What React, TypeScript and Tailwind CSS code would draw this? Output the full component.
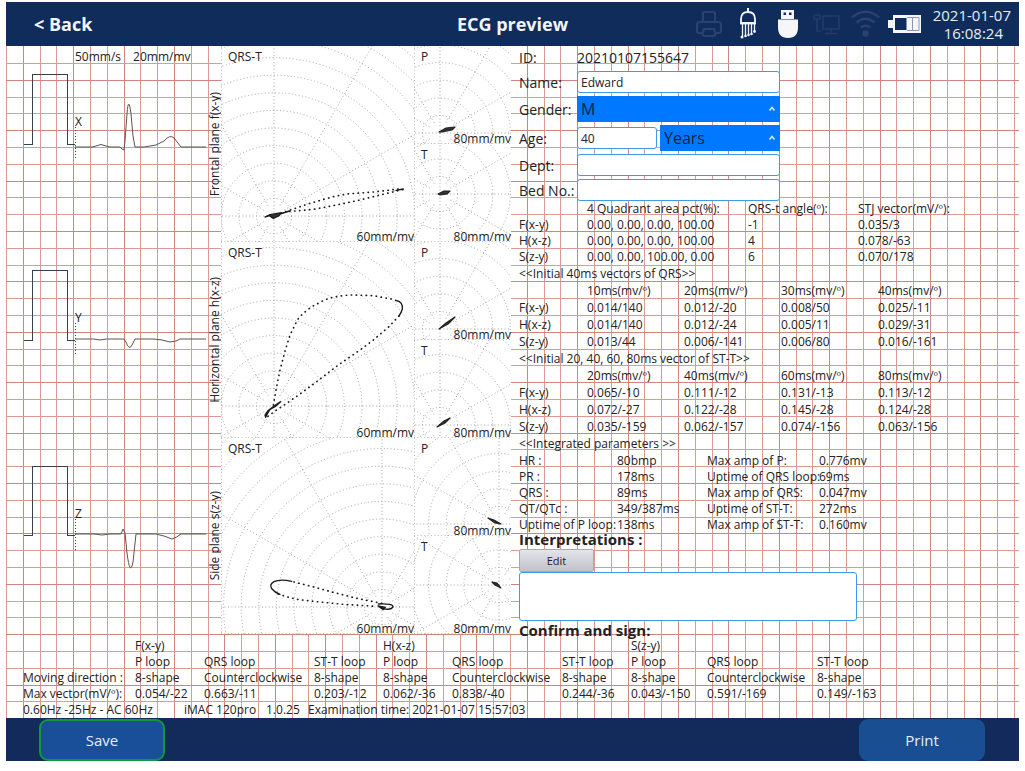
import type { ReactNode } from "react";

const VECTOR_ROWS = ["F(x-y)", "H(x-z)", "S(z-y)"];

const quadrantHead = ["4 Quadrant area pct(%):", "QRS-t angle(º):", "STJ vector(mV/º):"];
const quadrant = [
  ["0.00, 0.00, 0.00, 100.00", "-1", "0.035/3"],
  ["0.00, 0.00, 0.00, 100.00", "4", "0.078/-63"],
  ["0.00, 0.00, 100.00, 0.00", "6", "0.070/178"],
];

const qrsHead = ["10ms(mv/º)", "20ms(mv/º)", "30ms(mv/º)", "40ms(mv/º)"];
const qrs = [
  ["0.014/140", "0.012/-20", "0.008/50", "0.025/-11"],
  ["0.014/140", "0.012/-24", "0.005/11", "0.029/-31"],
  ["0.013/44", "0.006/-141", "0.006/80", "0.016/-161"],
];

const sttHead = ["20ms(mv/º)", "40ms(mv/º)", "60ms(mv/º)", "80ms(mv/º)"];
const stt = [
  ["0.065/-10", "0.111/-12", "0.131/-13", "0.113/-12"],
  ["0.072/-27", "0.122/-28", "0.145/-28", "0.124/-28"],
  ["0.035/-159", "0.062/-157", "0.074/-156", "0.063/-156"],
];

const integrated = [
  ["HR :", "80bmp", "Max amp of P:", "0.776mv"],
  ["PR :", "178ms", "Uptime of QRS loop:", "69ms"],
  ["QRS :", "89ms", "Max amp of QRS:", "0.047mv"],
  ["QT/QTc :", "349/387ms", "Uptime of ST-T:", "272ms"],
  ["Uptime of P loop:", "138ms", "Max amp of ST-T:", "0.160mv"],
];

const loopHead = ["P loop", "QRS loop", "ST-T loop", "P loop", "QRS loop", "ST-T loop", "P loop", "QRS loop", "ST-T loop"];
const directions = ["8-shape", "Counterclockwise", "8-shape", "8-shape", "Counterclockwise", "8-shape", "8-shape", "Counterclockwise", "8-shape"];
const maxVectors = ["0.054/-22", "0.663/-11", "0.203/-12", "0.062/-36", "0.838/-40", "0.244/-36", "0.043/-150", "0.591/-169", "0.149/-163"];

function GraphPaper() {
  const steps = Array.from({ length: 160 }, (_, i) => i);
  return (
    <svg className="pointer-events-none absolute inset-0 h-full w-full" aria-hidden="true" shapeRendering="crispEdges">
      {steps.map((i) => (
        <rect key={`v${i}`} x={Math.round(i * 16.8)} y="0" width="1" height="100%" fill={i % 3 === 1 ? "#cf8580" : "#dc9a95"} />
      ))}
      {steps.map((i) => (
        <rect key={`h${i}`} x="0" y={Math.round(17 + i * 16.8)} width="100%" height="1" fill={i % 3 === 1 ? "#cf8580" : "#dc9a95"} />
      ))}
    </svg>
  );
}

type Point = [number, number];

function PolarGrid({ center, width, height, children }: { center: Point; width: number; height: number; children: ReactNode }) {
  const [cx, cy] = center;
  return (
    <svg className="absolute inset-0 h-full w-full" viewBox={`0 0 ${width} ${height}`} aria-hidden="true">
      <g fill="none" stroke="#9a9a9a" strokeWidth="0.9" strokeDasharray="1 2.4">
        {Array.from({ length: 13 }, (_, i) => (
          <circle key={i} cx={cx} cy={cy} r={(i + 1) * 17.6} />
        ))}
        {Array.from({ length: 12 }, (_, i) => {
          const a = (i * Math.PI) / 6;
          const start = i % 3 === 0 ? 0 : 12;
          return <line key={i} x1={cx + start * Math.cos(a)} y1={cy + start * Math.sin(a)} x2={cx + 300 * Math.cos(a)} y2={cy + 300 * Math.sin(a)} />;
        })}
        <path d={`M0.5 0V${height}M0 ${height - 0.5}H${width}`} stroke="#b5b5b5" />
      </g>
      {children}
    </svg>
  );
}

type PlaneSpec = {
  title: string;
  lead: string;
  pulse: string;
  trace: string;
  qrs: { center: Point; dots: string; solid: string; shift: string };
  p: { center: Point; loop: string };
  t: { center: Point; loop: string };
};

const planes: PlaneSpec[] = [
  {
    title: "Frontal plane f(x-y)",
    lead: "X",
    pulse: "M18 98H26V28H61V98H69",
    trace: "M69 101H86L90 100Q95 97 100 100L104 101H114L116 103L118 104L119 95L121 68Q122.500 48 125 68L127 90L129 101H138L150 99L158 95Q164 88 168 92L175 101H200",
    qrs: {
      center: [53, 170],
      shift: "translate(-21 -6) scale(0.33333)",
      dots: "M243 520L265 512L330 490L400 470L440 462L520 456L605 446M608 449L540 465L480 480L400 497L340 508L262 515",
      solid: "M195 531L210 524L245 518L236 528L220 535L208 527Z M240 522L268 513M588 451L610 447",
    },
    p: { center: [26, 87], loop: "M25 86L32 82L41 81L38 84L28 86Z" },
    t: { center: [26, 50], loop: "M24 50L30 47L36 47L33 50L26 51Z" },
  },
  {
    title: "Horizontal plane h(x-z)",
    lead: "Y",
    pulse: "M18 98H26V28H61V98H69",
    trace: "M69 97H88L94 98L100 97H118L120 100Q123 109 126 103L129 97H148L156 98L164 100L170 99L174 97H200",
    qrs: {
      center: [53, 164],
      shift: "translate(-21 -2) scale(0.33333)",
      dots: "M220 495L228 450L240 390L256 330L270 285L292 240Q304 224 320 212Q336 198 355 190Q376 177 400 172Q430 165 460 165L520 167L580 178L600 187M597 228L565 262L520 300L480 330L415 375L350 425L300 462L260 490L230 510L202 530",
      solid: "M197 532L195 525L203 513L222 498L242 485L225 500L210 508L200 525Z",
    },
    p: { center: [26, 87], loop: "M25 87L32 81L41 75L34 82Z" },
    t: { center: [26, 85], loop: "M23 87L30 81L36 78L31 83Z" },
  },
  {
    title: "Side plane s(z-y)",
    lead: "Z",
    pulse: "M18 97H26V28H61V97H69",
    trace: "M69 96H88L96 97L104 96H115L117 91L119 95L121 115Q124 139 127 124L130 96H150L158 98L166 101Q170 100 175 96H200",
    qrs: {
      center: [161, 169],
      shift: "translate(-21 -8) scale(0.33333)",
      dots: "M545 520L470 505L400 487L330 468L270 453M235 492L260 500L290 508L350 515L430 523L530 529",
      solid: "M534 528L556 532L550 539Z",
    },
    p: { center: [85, 86], loop: "M74 80L80 82L87 86L81 85Z" },
    t: { center: [85, 49], loop: "M78 46L83 47L87 52L81 49Z" },
  },
];

const curveExtras = [
  "",
  "M590 182Q609 186 607 207Q604 218 597 228",
  "M275 454Q240 446 222 455Q206 464 216 477Q224 487 240 493M535 522Q580 520 579 531Q572 541 550 536",
];

function PanelLabels({ name, scale }: { name: string; scale: string }) {
  return (
    <div className="relative flex h-full flex-col justify-between pl-[7px] text-[12px] leading-4 text-[#222]">
      <span className="pt-[3px]">{name}</span>
      <span className="-mb-[3px] self-end">{scale}</span>
    </div>
  );
}

function PlaneRow({ plane, index }: { plane: PlaneSpec; index: number }) {
  return (
    <div className="flex h-[196px]">
      <div className="relative w-[202px]">
        <svg className="absolute inset-0 h-full w-full" viewBox="0 0 202 196" aria-hidden="true">
          <path d={plane.pulse} fill="none" stroke="#34424c" strokeWidth="1" shapeRendering="crispEdges" />
          <path d={plane.trace} fill="none" stroke="#5a5450" strokeWidth="1" strokeLinejoin="round" />
          <path d="M69.500 81V114" stroke="#444" strokeWidth="1" strokeDasharray="1 2" />
        </svg>
        <div className="relative flex h-full flex-col pl-[69px] text-[12px] leading-4 text-[#222]">
          <div className="flex h-[68px] gap-3 pt-[3px]">
            {index === 0 && (
              <>
                <span>50mm/s</span>
                <span>20mm/mv</span>
              </>
            )}
          </div>
          <span>{plane.lead}</span>
        </div>
      </div>
      <div className="flex w-[13px] items-center justify-center">
        <span className="rotate-180 text-[12px] leading-3 whitespace-nowrap text-[#222] [writing-mode:vertical-rl]">{plane.title}</span>
      </div>
      <div className="relative w-[193px] bg-white">
        <PolarGrid center={plane.qrs.center} width={193} height={196}>
          <g transform={plane.qrs.shift} fill="none" stroke="#1a1a1a" strokeLinecap="round" strokeLinejoin="round">
            <path d={plane.qrs.dots} strokeWidth="5" strokeDasharray="1 14" />
            <path d={plane.qrs.solid} strokeWidth="4" fill="#333" />
            <path d={curveExtras[index]} strokeWidth="4" />
          </g>
        </PolarGrid>
        <PanelLabels name="QRS-T" scale="60mm/mv" />
      </div>
      <div className="grid w-[97px] grid-rows-2 bg-white">
        {[
          { name: "P", ...plane.p },
          { name: "T", ...plane.t },
        ].map((panel) => (
          <div key={panel.name} className="relative h-[98px]">
            <PolarGrid center={panel.center} width={97} height={98}>
              <path d={panel.loop} fill="#333" stroke="#222" strokeWidth="1.200" strokeLinejoin="round" />
            </PolarGrid>
            <PanelLabels name={panel.name} scale="80mm/mv" />
          </div>
        ))}
      </div>
    </div>
  );
}

function VectorTable({ head, rows, label, compact = false }: { head: string[]; rows: string[][]; label: string; compact?: boolean }) {
  return (
    <table className="table-fixed border-collapse text-left whitespace-nowrap" aria-label={label}>
      <colgroup>
        <col className="w-[68px]" />
        {compact ? (
          <>
            <col className="w-[161px]" />
            <col className="w-[110px]" />
            <col className="w-[97px]" />
          </>
        ) : (
          head.map((h) => <col key={h} className="w-[97px]" />)
        )}
      </colgroup>
      <thead>
        <tr className="h-4 leading-4">
          <td className="p-0" />
          {head.map((h) => (
            <th key={h} className="p-0 font-normal">{h}</th>
          ))}
        </tr>
      </thead>
      <tbody>
        {rows.map((row, r) => (
          <tr key={VECTOR_ROWS[r]} className={compact ? "leading-4" : "leading-[17px]"}>
            <th className="p-0 font-normal">{VECTOR_ROWS[r]}</th>
            {row.map((v, c) => (
              <td key={c} className="p-0">{v}</td>
            ))}
          </tr>
        ))}
      </tbody>
    </table>
  );
}

function UpCaret() {
  return (
    <svg className="pointer-events-none absolute top-1/2 right-1 -mt-1 h-2 w-2" viewBox="0 0 8 8" fill="none" stroke="#d9ecff" strokeWidth="1.500" aria-hidden="true">
      <path d="M1.500 5.500L4 2.500L6.500 5.500" />
    </svg>
  );
}

const inputClass = "h-[22px] rounded-[3px] border border-[#3f9be8] bg-white px-[3px] text-[12px] text-[#222] outline-none";
const selectClass = "h-[26px] w-full appearance-none bg-[#0078ff] px-1 text-[16px] leading-5 text-[#0d2440] outline-none";

function PatientForm() {
  return (
    <form className="flex flex-col gap-[3px] text-[14px] text-[#222]">
      <div className="flex h-[22px] items-center">
        <span className="w-[58px]">ID:</span>
        <span>20210107155647</span>
      </div>
      <div className="flex items-center">
        <label htmlFor="name" className="w-[58px]">Name:</label>
        <input id="name" className={`${inputClass} w-[203px]`} defaultValue="Edward" />
      </div>
      <div className="flex items-center">
        <label htmlFor="gender" className="w-[58px]">Gender:</label>
        <div className="relative w-[203px]">
          <select id="gender" className={selectClass} defaultValue="M">
            <option>M</option>
            <option>F</option>
          </select>
          <UpCaret />
        </div>
      </div>
      <div className="flex items-center">
        <label htmlFor="age" className="w-[58px]">Age:</label>
        <input id="age" className={`${inputClass} mr-[3px] w-[80px]`} defaultValue="40" />
        <div className="relative w-[120px]">
          <select aria-label="Age unit" className={selectClass} defaultValue="Years">
            <option>Years</option>
            <option>Months</option>
          </select>
          <UpCaret />
        </div>
      </div>
      <div className="flex items-center">
        <label htmlFor="dept" className="w-[58px]">Dept:</label>
        <input id="dept" className={`${inputClass} w-[203px]`} />
      </div>
      <div className="flex items-center">
        <label htmlFor="bed" className="w-[58px] whitespace-nowrap">Bed No.:</label>
        <input id="bed" className={`${inputClass} w-[203px]`} />
      </div>
    </form>
  );
}

function StatusIcons() {
  return (
    <div className="flex items-center">
      <svg className="mr-[16px] h-[28px] w-[28px]" viewBox="0 0 28 28" fill="none" stroke="#2b416f" strokeWidth="2.200" aria-label="Printer">
        <path d="M8 12V3.500Q8 2 9.500 2H18.500Q20 2 20 3.500V12" />
        <path d="M7 23H4Q2 23 2 21V15Q2 12 5 12H23Q26 12 26 15V21Q26 23 24 23H21" />
        <path d="M9 19H19L20.500 23Q20.500 26 18 26H10Q7.500 26 7.500 23Z" />
      </svg>
      <svg className="mr-[20px] h-[32px] w-[18px]" viewBox="0 0 18 32" fill="none" stroke="#f2f5fa" strokeWidth="1.800" aria-label="Leads">
        <path d="M9 0V4" strokeWidth="2" />
        <path d="M2 15V11Q2 4 9 4Q16 4 16 11V15Z" />
        <path d="M1 15.500H17" />
        <path d="M3.500 16V28M6.500 16V27M9.500 16V26M12.500 16V25M15.500 16V23" strokeWidth="1.300" />
        <g fill="#f2f5fa" stroke="none">
          <circle cx="3" cy="29" r="1.500" />
          <circle cx="6.500" cy="28" r="1.300" />
          <circle cx="9.500" cy="27" r="1.300" />
          <circle cx="12.500" cy="26" r="1.300" />
          <circle cx="15.500" cy="23.500" r="1.400" />
        </g>
      </svg>
      <svg className="mr-[14px] h-[28px] w-[22px]" viewBox="0 0 22 28" aria-label="USB drive">
        <path d="M4 0H17V9H4Z" fill="#f4f6fa" />
        <path d="M6.500 2.500H9V5H6.500ZM12 2.500H14.500V5H12Z" fill="#102c5b" />
        <path d="M1 9.500H21V17Q21 28 11 28Q1 28 1 17Z" fill="#f4f6fa" />
      </svg>
      <svg className="mr-[10px] h-[22px] w-[28px]" viewBox="0 0 28 22" fill="none" stroke="#243a69" strokeWidth="1.600" aria-label="Network">
        <path d="M10 3H26V16H10ZM18 16V20M12 20.500H24" />
        <path d="M1 2H7V6H1ZM4 6V18H8" />
      </svg>
      <svg className="mr-[8px] h-[28px] w-[29px]" viewBox="0 0 29 28" fill="none" stroke="#2b416f" strokeWidth="2.400" aria-label="Wi-Fi">
        <path d="M1 7.500Q14.500 -4 28 7.500M5.500 12.500Q14.500 5 23.500 12.500M10 17.500Q14.500 14 19 17.500" />
        <circle cx="14.500" cy="23.500" r="3.200" fill="#2b416f" stroke="none" />
      </svg>
      <svg className="mr-[8px] h-[20px] w-[33px]" viewBox="0 0 33 20" aria-label="Battery">
        <path d="M5 1H33V19H5V14H0V6H5Z" fill="#f4f6fa" />
        <path d="M7 4H18.500V16H7Z" fill="#102c5b" />
        <path d="M19 3.500H31V16.500H19M24.500 4V16" stroke="#8d9ab5" strokeWidth="1" fill="none" />
      </svg>
    </div>
  );
}

export default function App() {
  return (
    <div className="min-h-screen bg-white pt-[2px] pr-[6px] pl-[6px] font-['Open_Sans','Noto_Sans',sans-serif] text-[#222]">
      <header className="grid h-[44px] grid-cols-[1fr_auto_1fr] items-center bg-[#102c5b] text-[#f2f5fa]">
        <button type="button" className="justify-self-start pl-7 text-[18px] font-bold">&lt; Back</button>
        <h1 className="text-[18px] font-bold">ECG preview</h1>
        <div className="flex items-center justify-self-end pr-[8px]">
          <StatusIcons />
          <time className="w-[82px] text-right text-[15px] leading-[18px] text-[#e6ecf5]">
            <span className="block">2021-01-07</span>
            <span className="block pr-2">16:08:24</span>
          </time>
        </div>
      </header>

      <main className="relative overflow-hidden">
        <GraphPaper />
        <div className="relative flex">
          <section className="shrink-0" aria-label="Vector loops">
            {planes.map((plane, i) => (
              <PlaneRow key={plane.lead} plane={plane} index={i} />
            ))}
          </section>

          <section className="min-w-0 flex-1 pl-[8px] text-[12px]" aria-label="Patient and measurements">
            <PatientForm />
            <VectorTable head={quadrantHead} rows={quadrant} label="Quadrant areas" compact />
            <p className="leading-[18px]">&lt;&lt;Initial 40ms vectors of QRS&gt;&gt;</p>
            <VectorTable head={qrsHead} rows={qrs} label="Initial vectors of QRS" />
            <p className="leading-[18px]">&lt;&lt;Initial 20, 40, 60, 80ms vector of ST-T&gt;&gt;</p>
            <VectorTable head={sttHead} rows={stt} label="Initial vectors of ST-T" />
            <p className="leading-[18px]">&lt;&lt;Integrated parameters &gt;&gt;</p>
            <table className="w-[360px] table-fixed text-left leading-4 whitespace-nowrap" aria-label="Integrated parameters">
              <colgroup>
                <col className="w-[98px]" />
                <col className="w-[90px]" />
                <col className="w-[112px]" />
                <col className="w-[60px]" />
              </colgroup>
              <tbody>
                {integrated.map((row) => (
                  <tr key={row[0]}>
                    <th className="p-0 font-normal">{row[0]}</th>
                    <td className="p-0">{row[1]}</td>
                    <th className="p-0 font-normal">{row[2]}</th>
                    <td className="p-0">{row[3]}</td>
                  </tr>
                ))}
              </tbody>
            </table>
            <label htmlFor="interpretations" className="block h-4 text-[15px] leading-3 font-bold">Interpretations :</label>
            <button type="button" className="block h-[23px] w-[75px] rounded-[2px] border border-[#a9a9b0] bg-gradient-to-b from-[#e4e4ea] to-[#c2c2cc] text-[11px] leading-4">Edit</button>
            <textarea id="interpretations" className="block h-[49px] w-[338px] resize-none rounded-[3px] border border-[#3f9be8] bg-white outline-none" />
            <h2 className="text-[15px] leading-[18px] font-bold">Confirm and sign:</h2>
          </section>
        </div>

        <section className="relative -mt-px pl-[17px] text-[12px] leading-4 whitespace-nowrap" aria-label="Loop summary">
          <table className="table-fixed text-left">
            <colgroup>
              <col className="w-[112px]" />
              <col className="w-[69px]" />
              <col className="w-[110px]" />
              <col className="w-[69px]" />
              <col className="w-[69px]" />
              <col className="w-[110px]" />
              <col className="w-[69px]" />
              <col className="w-[76px]" />
              <col className="w-[110px]" />
              <col className="w-[70px]" />
            </colgroup>
            <thead>
              <tr>
                <td className="p-0" />
                {VECTOR_ROWS.map((name) => (
                  <th key={name} colSpan={3} className="p-0 font-normal">{name}</th>
                ))}
              </tr>
              <tr>
                <td className="p-0" />
                {loopHead.map((name, i) => (
                  <th key={i} className="p-0 font-normal">{name}</th>
                ))}
              </tr>
            </thead>
            <tbody>
              <tr>
                <th className="p-0 font-normal">Moving direction :</th>
                {directions.map((v, i) => (
                  <td key={i} className="p-0">{v}</td>
                ))}
              </tr>
              <tr>
                <th className="p-0 font-normal">Max vector(mV/º):</th>
                {maxVectors.map((v, i) => (
                  <td key={i} className="p-0">{v}</td>
                ))}
              </tr>
            </tbody>
          </table>
          <div className="flex">
            <span className="w-[161px]">0.60Hz -25Hz - AC 60Hz</span>
            <span className="w-[82px]">iMAC 120pro</span>
            <span className="w-[42px]">1.0.25</span>
            <span>Examination time: 2021-01-07 15:57:03</span>
          </div>
        </section>
      </main>

      <footer className="flex h-[43px] items-end justify-between bg-[#132b5b] pr-[34px] pl-[33px] text-[15px] text-[#e6eefa]">
        <button type="button" className="h-[42px] w-[126px] rounded-[9px] border-2 border-[#12963f] bg-[#194e99]">Save</button>
        <button type="button" className="h-[42px] w-[126px] rounded-[9px] bg-[#194e93]">Print</button>
      </footer>
    </div>
  );
}
